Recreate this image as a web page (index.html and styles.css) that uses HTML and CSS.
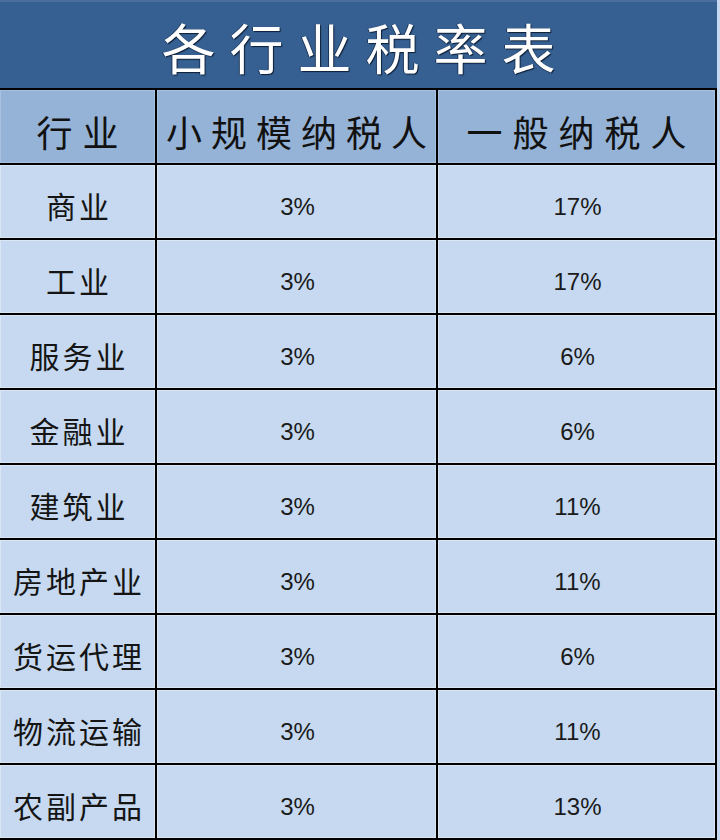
FILE: index.html
```html
<!DOCTYPE html>
<html lang="zh-CN">
<head>
<meta charset="utf-8">
<title>各行业税率表</title>
<link rel="stylesheet" href="styles.css">
</head>
<body>
<div class="page">
  <div class="title"><span class="title-text">各行业税率表</span></div>
  <div class="sheet">
    <div class="cell head"><span class="cjk hd">行业</span></div>
    <div class="cell head"><span class="cjk hd tight">小规模纳税人</span></div>
    <div class="cell head"><span class="cjk hd">一般纳税人</span></div>

    <div class="cell"><span class="cjk">商业</span></div>
    <div class="cell"><span class="num">3%</span></div>
    <div class="cell"><span class="num">17%</span></div>

    <div class="cell"><span class="cjk">工业</span></div>
    <div class="cell"><span class="num">3%</span></div>
    <div class="cell"><span class="num">17%</span></div>

    <div class="cell"><span class="cjk">服务业</span></div>
    <div class="cell"><span class="num">3%</span></div>
    <div class="cell"><span class="num">6%</span></div>

    <div class="cell"><span class="cjk">金融业</span></div>
    <div class="cell"><span class="num">3%</span></div>
    <div class="cell"><span class="num">6%</span></div>

    <div class="cell"><span class="cjk">建筑业</span></div>
    <div class="cell"><span class="num">3%</span></div>
    <div class="cell"><span class="num">11%</span></div>

    <div class="cell"><span class="cjk">房地产业</span></div>
    <div class="cell"><span class="num">3%</span></div>
    <div class="cell"><span class="num">11%</span></div>

    <div class="cell"><span class="cjk">货运代理</span></div>
    <div class="cell"><span class="num">3%</span></div>
    <div class="cell"><span class="num">6%</span></div>

    <div class="cell"><span class="cjk">物流运输</span></div>
    <div class="cell"><span class="num">3%</span></div>
    <div class="cell"><span class="num">11%</span></div>

    <div class="cell"><span class="cjk">农副产品</span></div>
    <div class="cell"><span class="num">3%</span></div>
    <div class="cell"><span class="num">13%</span></div>
  </div>
</div>
</body>
</html>
```
FILE: styles.css
```css
html, body {
  margin: 0;
  padding: 0;
}
body {
  background: #c6d9f0;
  width: 720px;
  height: 840px;
  overflow: hidden;
}
.page {
  width: 720px;
}
.title {
  height: 86px;
  background: #366092;
  border-top: 2px solid #4a6f9e;
  display: flex;
  align-items: center;
  justify-content: center;
  width: 717px;
}
.title-text {
  font-family: "Noto Sans CJK SC", sans-serif;
  font-size: 54px;
  line-height: 1;
  color: #ffffff;
  letter-spacing: 14px;
  padding-left: 14px;
  padding-top: 4px;
  white-space: nowrap;
  text-shadow: 1px 1px 1px #0d1e36, -1px 0 0 #1c355a;
}
.sheet {
  display: grid;
  grid-template-columns: 155px 279px 277px;
  grid-auto-rows: 73px;
  gap: 2px;
  background: #000;
  border-top: 2px solid #000;
  border-right: 2px solid #000;
  border-bottom: 2px solid #000;
  width: 715px;
}
.cell {
  background: #c6d9f0;
  display: flex;
  align-items: center;
  justify-content: center;
  padding-top: 6px;
  box-sizing: border-box;
  box-shadow: inset 0 0 0 1px #dbe6f4;
  overflow: hidden;
}
.cell.head {
  background: #95b3d7;
  padding-top: 8px;
  box-shadow: inset 0 0 0 1px #a9c1e0;
}
.cjk {
  font-family: "Noto Sans CJK SC", sans-serif;
  font-size: 30px;
  line-height: 1;
  color: #151515;
  letter-spacing: 3px;
  padding-left: 3px;
  white-space: nowrap;
}
.cjk.hd {
  font-size: 36px;
  letter-spacing: 10px;
  padding-left: 10px;
  color: #111;
}
.cjk.hd.tight {
  letter-spacing: 9px;
  padding-left: 0;
  margin-right: -9px;
}
.num {
  font-family: "Liberation Sans", Arial, sans-serif;
  font-size: 24px;
  line-height: 1;
  color: #1a1a1a;
  padding-left: 2px;
  padding-top: 4px;
}
```
